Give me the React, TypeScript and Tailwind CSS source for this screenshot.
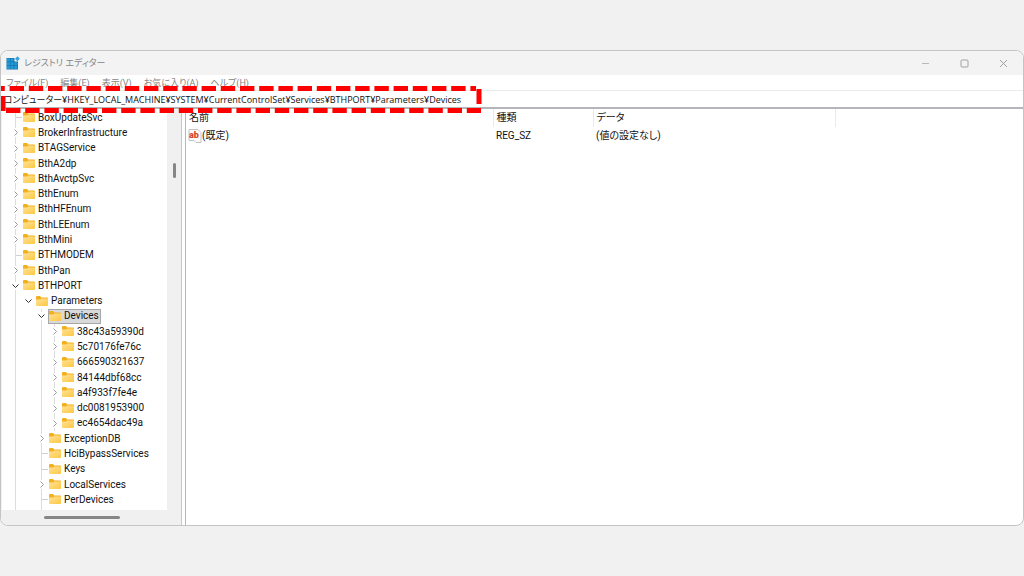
import { useState } from "react";

type Branch = "closed" | "open" | "leaf";

const KEYS: { name: string; level: number; branch: Branch }[] = [
  { name: "BoxUpdateSvc", level: 0, branch: "leaf" },
  { name: "BrokerInfrastructure", level: 0, branch: "closed" },
  { name: "BTAGService", level: 0, branch: "closed" },
  { name: "BthA2dp", level: 0, branch: "closed" },
  { name: "BthAvctpSvc", level: 0, branch: "closed" },
  { name: "BthEnum", level: 0, branch: "closed" },
  { name: "BthHFEnum", level: 0, branch: "closed" },
  { name: "BthLEEnum", level: 0, branch: "closed" },
  { name: "BthMini", level: 0, branch: "closed" },
  { name: "BTHMODEM", level: 0, branch: "leaf" },
  { name: "BthPan", level: 0, branch: "closed" },
  { name: "BTHPORT", level: 0, branch: "open" },
  { name: "Parameters", level: 1, branch: "open" },
  { name: "Devices", level: 2, branch: "open" },
  { name: "38c43a59390d", level: 3, branch: "closed" },
  { name: "5c70176fe76c", level: 3, branch: "closed" },
  { name: "666590321637", level: 3, branch: "closed" },
  { name: "84144dbf68cc", level: 3, branch: "closed" },
  { name: "a4f933f7fe4e", level: 3, branch: "closed" },
  { name: "dc0081953900", level: 3, branch: "closed" },
  { name: "ec4654dac49a", level: 3, branch: "closed" },
  { name: "ExceptionDB", level: 2, branch: "closed" },
  { name: "HciBypassServices", level: 2, branch: "leaf" },
  { name: "Keys", level: 2, branch: "leaf" },
  { name: "LocalServices", level: 2, branch: "closed" },
  { name: "PerDevices", level: 2, branch: "leaf" },
  { name: "", level: 2, branch: "leaf" },
  { name: "", level: 2, branch: "leaf" },
];

const MENUS = ["ファイル(F)", "編集(E)", "表示(V)", "お気に入り(A)", "ヘルプ(H)"];

const AppIcon = () => (
  <svg width="14" height="14" viewBox="0 0 14 14" className="shrink-0">
    <path d="M0.5 2h8v3.5H12V13.5H0.5z" fill="#0f76b0" />
    <path d="M1 2.5h3v3H1zM4.6 2.5h3v3h-3zM1 6.2h3v3H1zM4.6 6.2h3v3h-3zM8.3 6.2h3v3h-3zM1 10h3v3H1zM4.6 10h3v3h-3zM8.3 10h3v3h-3z" fill="#2399d6" />
    <path d="M9 3 11.3 0.3 13.8 2.6 11.6 5.2z" fill="#35a4dc" />
  </svg>
);

const FolderIcon = () => (
  <svg width="12" height="11" viewBox="0 0 12 11" className="shrink-0">
    <defs>
      <linearGradient id="folder" x1="0" y1="0" x2="1" y2="1">
        <stop offset="0" stopColor="#ffe39a" />
        <stop offset="1" stopColor="#fdc742" />
      </linearGradient>
    </defs>
    <path d="M0 1Q0 0 1 0h3l1.3 1.5H11q1 0 1 1V5H0z" fill="#f2b01e" />
    <path d="M0 3.4h4.2l1.2-1H12v6.8q0 .8-.8.8H.8Q0 10 0 9.2z" fill="url(#folder)" />
  </svg>
);

const BranchMark = ({ branch }: { branch: Branch }) => {
  switch (branch) {
    case "closed":
      return (
        <svg width="8" height="9" viewBox="0 0 8 9" fill="none" stroke="#9a9a9a" className="relative bg-white">
          <path d="m2.5 1.5 3 3-3 3" />
        </svg>
      );
    case "open":
      return (
        <svg width="9" height="8" viewBox="0 0 9 8" fill="none" stroke="#303030" className="relative shrink-0 bg-white">
          <path d="m1.5 2.5 3 3 3-3" />
        </svg>
      );
    default:
      return <span className="ml-auto h-px w-1/2 bg-[#d0d0d0]" />;
  }
};

// Vertical guide lines to the left of a key
const Guides = ({ level }: { level: number }) => (
  <>
    {Array.from({ length: level }, (_, i) => (
      <span key={i} className="flex w-[13px] shrink-0 justify-center self-stretch">
        {i !== 1 && <span className="w-px bg-[#dcdcdc]" />}
      </span>
    ))}
  </>
);

export default function RegistryEditor() {
  const [selected, setSelected] = useState("Devices");
  const [path, setPath] = useState(
    "コンピューター¥HKEY_LOCAL_MACHINE¥SYSTEM¥CurrentControlSet¥Services¥BTHPORT¥Parameters¥Devices"
  );

  return (
    <div className="flex h-screen flex-col bg-[#f1f1f1] pt-[50px] pb-[50px] font-['Roboto','Noto_Sans_CJK_JP',sans-serif] text-[10px] leading-4 text-[#111111] [font-feature-settings:'palt']">
      <div className="relative flex min-h-0 flex-1 flex-col overflow-hidden rounded-lg border border-[#c4c4c4] bg-white">

        {/* Title bar */}
        <header className="flex h-6 shrink-0 items-center bg-[#f3f3f3] pl-[5px] text-[#858585]">
          <AppIcon />
          <h1 className="ml-1 flex-1 text-[9px]">レジストリ エディター</h1>
          <button aria-label="最小化" className="flex h-6 w-[39px] items-center justify-center">
            <svg width="9" height="9" fill="none" stroke="#b8b8b8"><path d="M1 4.5h7" /></svg>
          </button>
          <button aria-label="最大化" className="flex h-6 w-[39px] items-center justify-center">
            <svg width="9" height="9" fill="none" stroke="#a0a0a0"><rect x="1" y="1" width="7" height="7" rx="1" /></svg>
          </button>
          <button aria-label="閉じる" className="flex h-6 w-[39px] items-center justify-center">
            <svg width="9" height="9" fill="none" stroke="#a0a0a0"><path d="m1 1 7 7M8 1 1 8" /></svg>
          </button>
        </header>

        {/* Menu bar */}
        <nav className="flex h-4 shrink-0 items-center gap-3 border-b border-[#ececec] pl-[5px] text-[9px] text-[#858585]">
          {MENUS.map((menu) => (
            <button key={menu}>{menu}</button>
          ))}
        </nav>

        {/* Address bar */}
        <input
          aria-label="アドレス"
          value={path}
          onChange={(e) => setPath(e.target.value)}
          className="h-[18px] shrink-0 border-b-2 border-[#b4b6ba] pl-[3px] font-['Open_Sans','Noto_Sans_CJK_JP',sans-serif] text-[9px] outline-none"
        />

        <div className="flex min-h-0 flex-1">
          {/* Key tree */}
          <aside className="flex w-[181px] shrink-0 flex-col border-r border-[#c8c8c8] bg-[#f0f0f0] pl-px">
            <div className="flex min-h-0 flex-1">
              <div className="flex-1 overflow-hidden bg-white pt-px">
                <ul className="grid h-[428px] auto-rows-fr pl-[7px]">
                  {KEYS.map((key, idx) => (
                    <li key={idx} className="flex items-center">
                      <Guides level={key.level} />
                      <span className="relative flex w-[13px] shrink-0 items-center justify-center self-stretch">
                        {key.level !== 1 && <span className="absolute inset-y-0 left-[6px] w-px bg-[#dcdcdc]" />}
                        <BranchMark branch={key.branch} />
                      </span>
                      <button
                        onClick={() => setSelected(key.name)}
                        className={`flex h-full items-center gap-[3px] border pr-px whitespace-nowrap ${
                          key.name !== "" && selected === key.name
                            ? "border-[#a8a8a8] bg-[#d9d9d9]"
                            : "border-transparent"
                        }`}
                      >
                        <FolderIcon />
                        {key.name}
                      </button>
                    </li>
                  ))}
                </ul>
              </div>
              <div className="flex w-[14px] justify-center pt-[54px]">
                <span className="h-[15px] w-[3px] rounded-full bg-[#868686]" />
              </div>
            </div>
            <div className="flex h-[15px] shrink-0 items-center pl-[42px]">
              <span className="h-[3px] w-[76px] rounded-full bg-[#868686]" />
            </div>
          </aside>

          {/* Values */}
          <main className="ml-[3px] flex-1 border-l border-[#b8b8b8]">
            <table className="w-full table-fixed text-left">
              <colgroup>
                <col className="w-[307px]" />
                <col className="w-[100px]" />
                <col className="w-[242px]" />
                <col />
              </colgroup>
              <thead>
                <tr className="h-[18px]">
                  <th className="border-r border-[#eaeaea] pl-[3px] font-normal">名前</th>
                  <th className="border-r border-[#eaeaea] pl-[3px] font-normal">種類</th>
                  <th className="border-r border-[#eaeaea] pl-[3px] font-normal">データ</th>
                  <th />
                </tr>
              </thead>
              <tbody>
                <tr className="h-[18px]">
                  <td className="pl-[2px]">
                    <span className="flex items-center">
                      <svg width="14" height="14" viewBox="0 0 14 14" className="shrink-0">
                        <path d="M1 .5h9l3 3v10H8l-2-2H1z" fill="#fafafa" stroke="#c4c4c4" />
                        <text x="1" y="9" fontSize="9" fontWeight="900" fill="#d9472b">ab</text>
                      </svg>
                      (既定)
                    </span>
                  </td>
                  <td className="pl-[3px]">REG_SZ</td>
                  <td className="pl-[3px]">(値の設定なし)</td>
                  <td />
                </tr>
              </tbody>
            </table>
          </main>
        </div>

        {/* Dashed marker round the address bar */}
        <svg width="482" height="28" className="pointer-events-none absolute top-[34px] -left-px" fill="none" stroke="#fe0000" strokeWidth="5">
          <path d="M0 3.5H476" strokeDasharray="14.4 4.8" strokeDashoffset="9.6" />
          <path d="M479 4v15" />
          <path d="M6 25.5H481" strokeDasharray="14.4 4.8" />
          <path d="M3 11v15" />
        </svg>
      </div>
    </div>
  );
}
